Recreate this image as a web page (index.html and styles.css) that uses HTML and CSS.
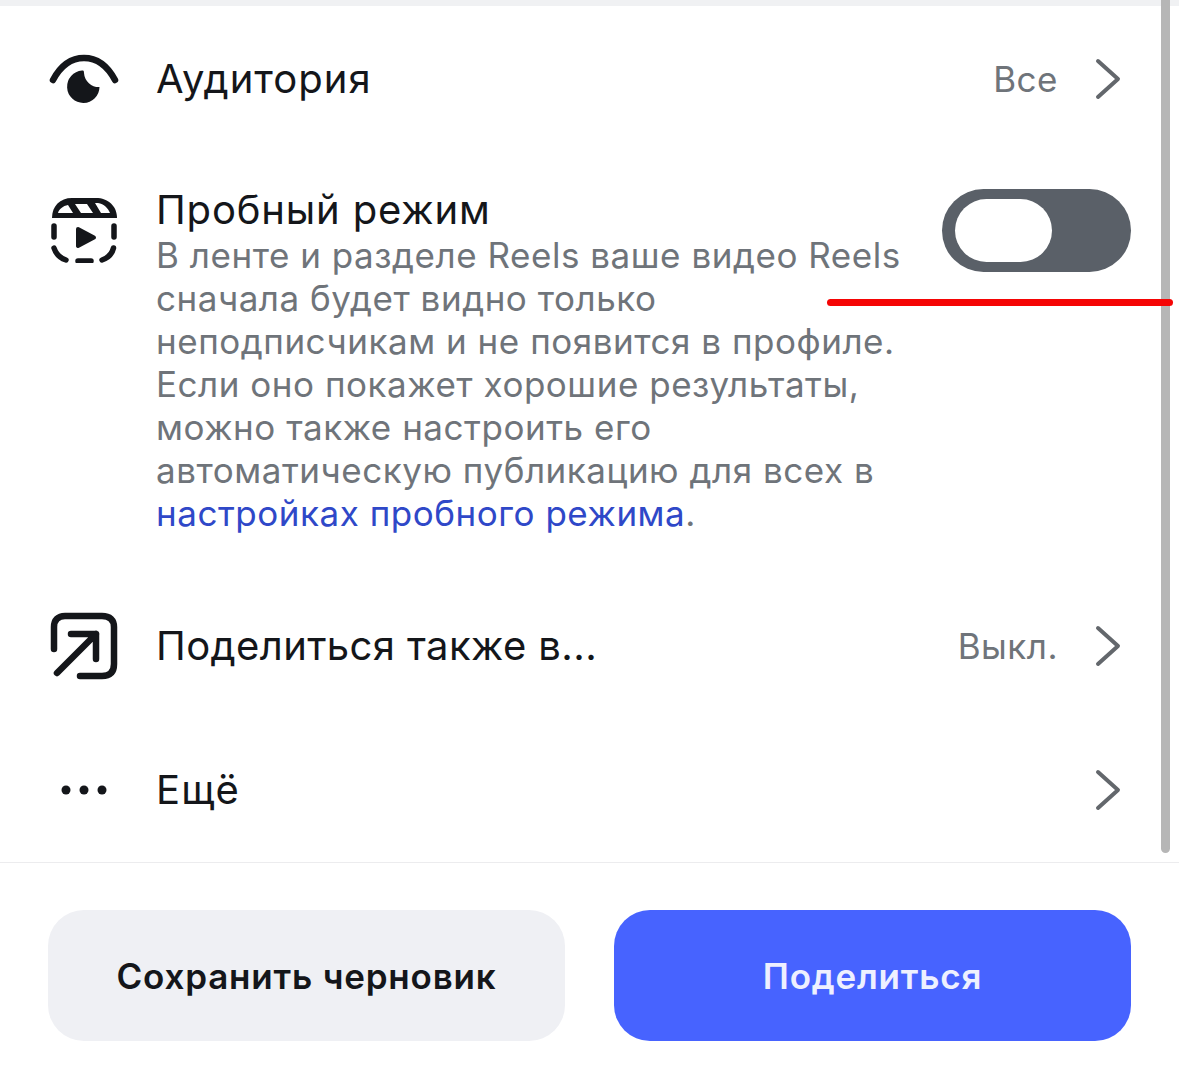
FILE: index.html
```html
<!DOCTYPE html>
<html lang="ru">
<head>
<meta charset="utf-8">
<title>Пробный режим</title>
<link rel="stylesheet" href="styles.css">
</head>
<body>
<div class="page">
  <div class="topstrip"></div>
  <div class="list">
    <div class="row row-single">
      <svg class="icon" viewBox="0 0 72 72"><path class="st" d="M5 37C13 22 24 15 36 15S59 22 67 37"/><path class="fl" d="M34 27.6A16.2 16.2 0 1 0 51.5 44A15 15 0 0 1 36 30C36 28 35.5 27.5 34 27.6Z"/></svg>
      <div class="title grow ls-a">Аудитория</div>
      <div class="value">Все</div>
      <svg class="chev" viewBox="0 0 28 44"><path d="M4 4l20 18L4 40"/></svg>
    </div>
    <div class="row row-trial">
      <svg class="icon icon-top" viewBox="0 0 72 72"><path class="fl" d="M4 27C4 15 12 7 24 7H48C60 7 69 15 69 27Z"/><path class="hole" d="M10 22C11 18 15 15 20 14L25 22ZM27 13H39L45 22H33ZM47 12H50C56 13 60 17 62 22H53Z"/><path class="st thin" d="M6 35V46M66 35V46M6 57C8 63 12 67 18 69M30 70H43M54 69C60 67 64 63 65.500 57"/><path class="fl tri" d="M30 38L46 46.500L30 55Z"/></svg>
      <div class="body">
        <div class="title ls-b">Пробный режим</div>
        <div class="desc">В ленте и разделе Reels ваше видео Reels сначала будет видно только неподписчикам и не появится в профиле. Если оно покажет хорошие результаты, можно также настроить его автоматическую публикацию для всех в <a class="link" href="#">настройках пробного режима</a>.</div>
      </div>
      <div class="toggle"><div class="knob"></div></div>
    </div>
    <div class="row row-single">
      <svg class="icon" viewBox="0 0 72 72"><path class="st" d="M6 39V17C6 10 10 6 17 6H54C62 6 66 10 66 17V54C66 62 62 66 54 66H32"/><path class="st" d="M9 63L48 24M23 24H48V49"/></svg>
      <div class="title grow ls-c">Поделиться также в...</div>
      <div class="value">Выкл.</div>
      <svg class="chev" viewBox="0 0 28 44"><path d="M4 4l20 18L4 40"/></svg>
    </div>
    <div class="row row-single">
      <svg class="icon" viewBox="0 0 72 72"><circle class="fl" cx="18" cy="36" r="4.5"/><circle class="fl" cx="36" cy="36" r="4.5"/><circle class="fl" cx="54" cy="36" r="4.5"/></svg>
      <div class="title grow ls-d">Ещё</div>
      <svg class="chev" viewBox="0 0 28 44"><path d="M4 4l20 18L4 40"/></svg>
    </div>
  </div>
  <div class="footer">
    <button class="btn btn-secondary">Сохранить черновик</button>
    <button class="btn btn-primary">Поделиться</button>
  </div>
  <div class="scrollbar"></div>
  <div class="redline"></div>
</div>
</body>
</html>
```
FILE: styles.css
```css
* { box-sizing: border-box; }
html, body { margin: 0; padding: 0; background: #fff; }
body { font-family: Inter, "Noto Sans", sans-serif; color: #14161a; }
.page { position: relative; width: 1179px; height: 1079px; overflow: hidden; display: flex; flex-direction: column; }
.topstrip { height: 6px; background: #f0f1f3; }
.list { display: flex; flex-direction: column; border-bottom: 1px solid #ececee; }
.row { display: flex; padding: 0 48px; }
.row-single { height: 144px; align-items: center; }
.row-single:first-child { height: 146px; }
.row-trial { height: 422px; padding-top: 36px; align-items: flex-start; }
.icon { width: 72px; height: 72px; flex: none; margin-right: 36px; }
.icon-top { margin-top: 3px; }
.st { fill: none; stroke: #14161a; stroke-width: 6.5; stroke-linecap: round; stroke-linejoin: round; }
.st.thin { stroke-width: 5.5; }
.fl { fill: #14161a; }
.hole { fill: #fff; }
.tri { stroke: #14161a; stroke-width: 4; stroke-linejoin: round; }
.title { font-size: 40px; line-height: 44px; letter-spacing: .6px; }
.ls-a { letter-spacing: 1px; }
.ls-b { letter-spacing: .85px; }
.ls-c { letter-spacing: .4px; }
.ls-d { letter-spacing: 1.2px; }
.grow { flex: 1; }
.value { font-size: 35px; color: #6f747a; letter-spacing: .5px; margin-right: 36px; }
.chev { width: 28px; height: 44px; flex: none; margin-right: 9px; fill: none; stroke: #63676c; stroke-width: 4; stroke-linecap: round; stroke-linejoin: round; }
.body { width: 761px; flex: none; margin-right: 25px; }
.desc { font-size: 35px; line-height: 43px; color: #6f747a; letter-spacing: .53px; margin-top: 2px; }
.link { color: #2f48c8; text-decoration: none; }
.toggle { width: 189px; height: 83px; flex: none; margin-top: 1px; border-radius: 42px; background: #5a6068; padding: 10px 13px; }
.knob { width: 97px; height: 63px; border-radius: 32px; background: #fff; }
.footer { flex: 1; display: flex; gap: 49px; padding: 47px 48px 0; }
.btn { width: 517px; height: 131px; border: none; border-radius: 36px; font-family: inherit; font-size: 35px; font-weight: 600; letter-spacing: .8px; }
.btn-secondary { background: #eff0f4; color: #14161a; }
.btn-primary { background: #4763ff; color: #eef0ff; }
.scrollbar { position: absolute; left: 1161px; top: 0; width: 9px; height: 853px; border-radius: 0 0 5px 5px; background: #b6b6b6; }
.redline { position: absolute; left: 827px; top: 299px; width: 346px; height: 7px; border-radius: 4px; background: #f50505; }
```
